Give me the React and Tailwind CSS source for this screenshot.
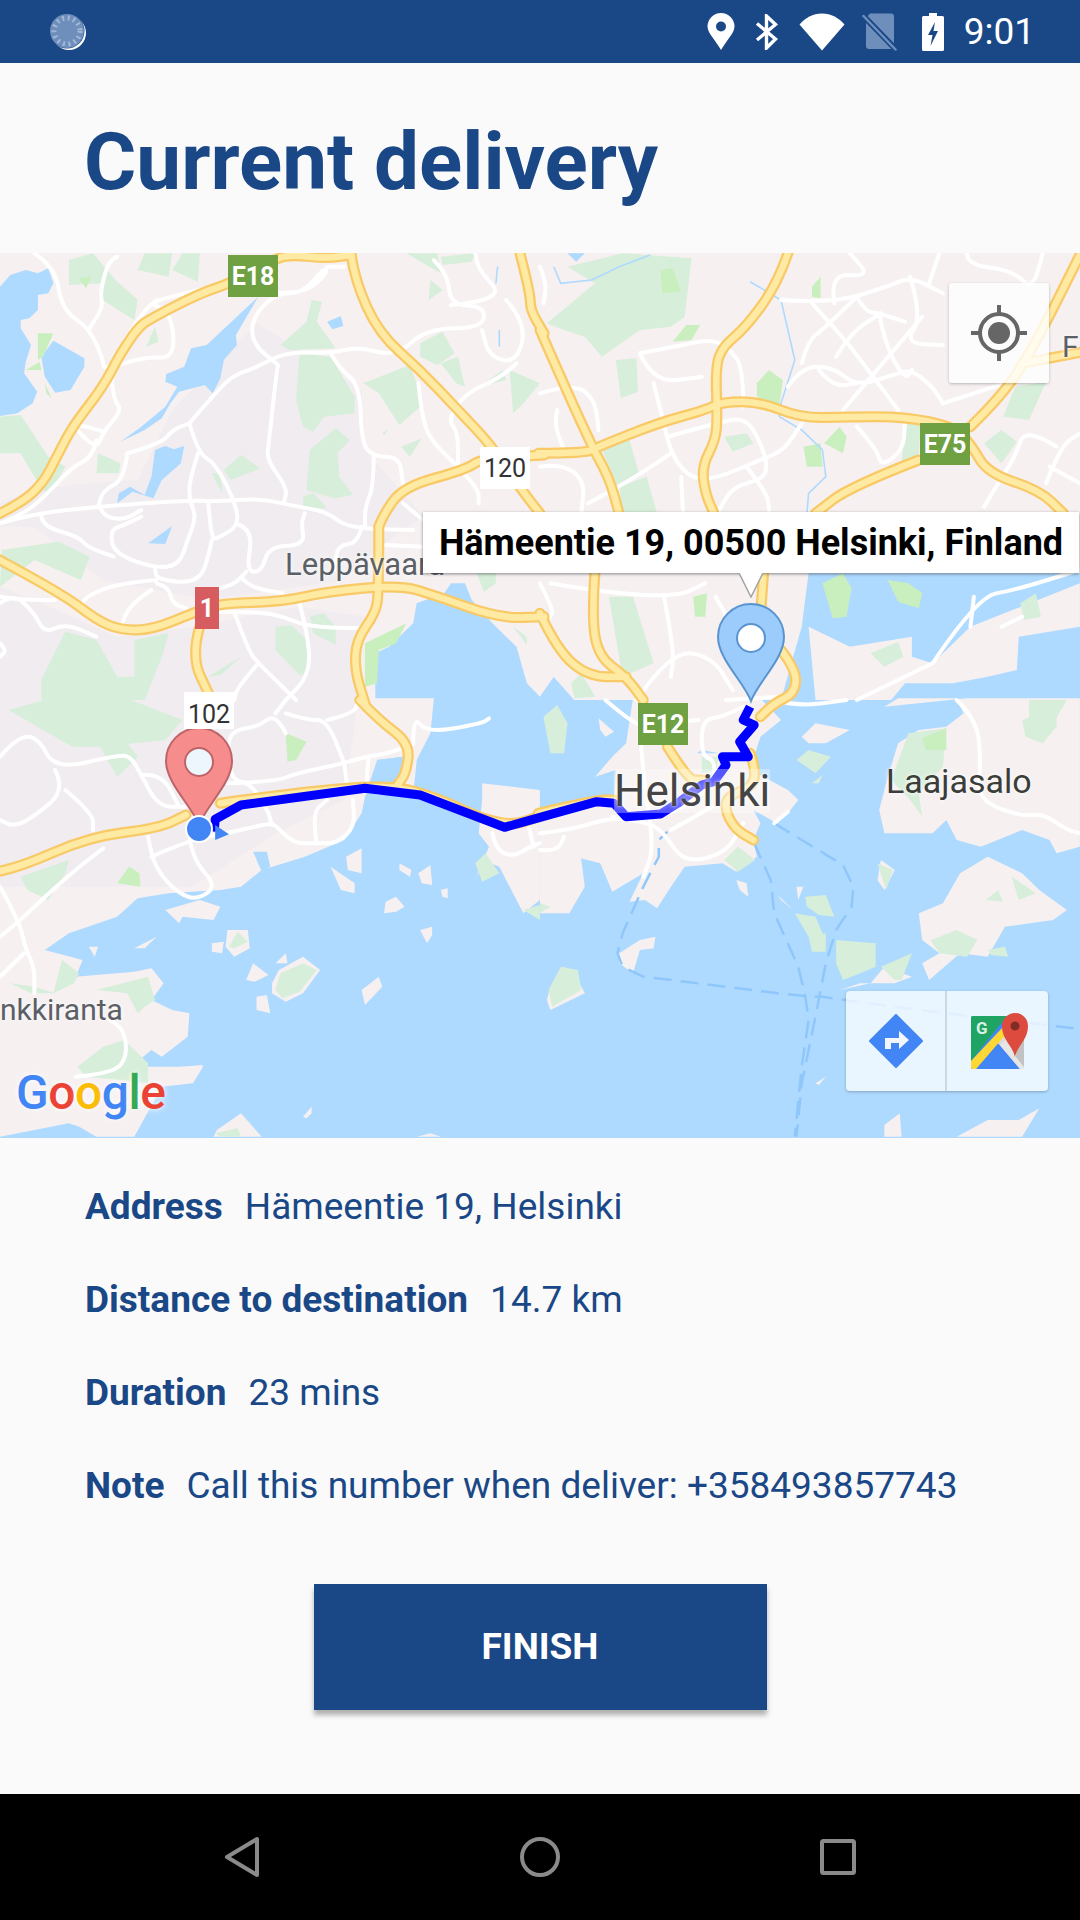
import React from "react";

const SX = 2.904, SY = 3;
const O = { A: [0, 250], B: [540, 250], C: [0, 700], D: [540, 700] };
const pts = (q, s) =>
  s.trim().split(/\s+/).map((p) => {
    const [x, y] = p.split(",").map(Number);
    return [+(O[q][0] + x / SX).toFixed(1), +(O[q][1] + y / SY).toFixed(1)];
  });
const toD = (list, close) =>
  "M" + list.map((p) => p.join(" ")).join("L") + (close ? "Z" : "");
const smooth = (list) => {
  if (list.length < 3) return toD(list);
  let d = `M${list[0][0]} ${list[0][1]}`;
  for (let i = 1; i < list.length - 1; i++) {
    const mx = (list[i][0] + list[i + 1][0]) / 2;
    const my = (list[i][1] + list[i + 1][1]) / 2;
    d += `Q${list[i][0]} ${list[i][1]} ${mx} ${my}`;
  }
  const l = list[list.length - 1];
  return d + `L${l[0]} ${l[1]}`;
};
const poly = (q, s) => toD(pts(q, s), true);
const many = (...segs) => {
  let out = [];
  for (let i = 0; i < segs.length; i += 2) out = out.concat(pts(segs[i], segs[i + 1]));
  return out;
};

const SEA = toD(
  many(
    "C", "-10,1320 -10,1000 60,1000 110,930 130,750 200,700 340,650 400,595 490,580 640,570 700,560 760,510 885,470 1000,420 1050,340 1060,290 1090,180",
    "A", "1090,1210 1130,1190 1200,1120 1210,1060 1290,1030 1310,1000 1350,1000 1370,1050 1430,1120 1500,1190 1530,1300 1568,1340",
    "B", "40,1280 100,1350 700,1350 760,1130 780,970 1580,970 1580,1350",
    "D", "1580,1320"
  ),
  true
);

const LAND = [
  ["C", "1040,-5 1260,-5 1250,100 1210,180 1200,285 1090,285 1170,250 1170,170 1095,180 1060,290 1000,300"],
  ["C", "1400,250 1568,270 1568,600 1520,640 1450,500 1400,480 1380,540 1420,440 1390,400 1400,300"],
  ["D", "0,340 100,320 130,560 85,640 0,640"],
  ["D", "270,-5 250,130 210,170 160,230 220,210 215,300 0,340 0,440 60,460 175,490 210,575 300,520 260,605 305,600 340,625 380,560 420,500 530,490 570,515 630,470 620,420 640,370 620,330 680,365 720,340 750,300 720,270 630,220 625,160 640,110 700,60 640,-5"],
  ["B", "100,1350 40,1280 20,1150 60,1000 60,970 760,970 750,1130 700,1350"],
  ["B", "780,1130 900,1190 1080,1160 1080,1220 1140,1240 1250,1130 1568,1000 1568,1130 1390,1160 1385,1260 1300,1280 1200,1300 1060,1300 1020,1350 800,1350"],
  ["D", "760,110 800,70 900,90 830,130 780,130"],
  ["D", "1040,130 1100,90 1180,80 1230,40 1210,-5 1040,-5 1000,20 1240,-5 1568,-5 1568,440 1500,460 1480,420 1400,390 1280,440 1210,420 1180,360 1140,400 1000,400 985,330 1010,230"],
  ["D", "1100,640 1170,610 1220,520 1300,470 1400,520 1450,570 1530,630 1490,660 1350,680 1300,770 1220,760 1130,840 1110,790 1160,760 1110,720"],
  ["D", "870,870 960,850 1000,800 1080,830 1030,850 930,850"],
  ["D", "990,480 1030,510 1000,570 980,540"],
  ["D", "170,55 215,95 190,110 175,90"],
  ["D", "745,560 765,560 750,600"],
  ["D", "690,585 735,630 700,600"],
  ["D", "570,540 600,550 605,590 580,570"],
  ["D", "230,760 290,720 335,710 330,745 290,750 270,820 230,790"],
  ["D", "800,1150 830,1130 810,1155"],
  ["D", "1000,1275 1045,1240 1050,1310 1000,1310"],
  ["D", "1210,1310 1300,1260 1390,1260 1450,1225 1400,1310"],
  ["D", "20,900 30,860 70,800 110,840 130,880 30,930"],
  ["C", "960,500 1030,550 1030,580 990,570"],
  ["C", "1005,470 1050,445 1050,520 1010,510"],
  ["C", "1160,490 1195,510 1190,530 1160,510"],
  ["C", "1215,520 1250,495 1255,555 1225,550"],
  ["C", "1280,570 1300,565 1300,595 1285,590"],
  ["C", "1120,605 1150,590 1175,620 1150,635 1115,640"],
  ["C", "1220,690 1255,680 1255,705 1240,730"],
  ["C", "480,630 580,600 640,620 620,660 530,650 520,670"],
  ["C", "660,690 720,690 725,745 680,770 655,740"],
  ["C", "615,730 650,725 645,760 615,755"],
  ["C", "800,790 830,760 835,790"],
  ["C", "715,840 735,790 780,825 740,845"],
  ["C", "790,850 810,810 880,770 930,810 880,880 830,905 790,880"],
  ["C", "745,890 775,885 785,940 745,930"],
  ["C", "1050,870 1100,830 1110,860 1060,915"],
  ["C", "390,745 455,710 420,745"],
  ["C", "258,740 285,740 275,770"],
  ["C", "0,930 130,750 240,780 220,830 390,815 440,805 475,850 440,900 500,930 550,940 545,1010 470,1070 440,1050 380,1100 520,1100 590,1100 560,1150 470,1160 390,1310 280,1310 230,1280 200,1270 0,1310"],
  ["C", "525,1100 590,1095 560,1150 530,1140"],
  ["C", "880,1250 905,1220 905,1240 890,1255"],
  ["C", "630,1290 700,1240 760,1310 620,1310"],
  ["C", "1210,1310 1250,1300 1280,1310"],
];

const DARKLAND = [
  ["A", "560,420 745,220 870,300 1050,420 1060,600 1230,800 1090,900 1000,990 600,1050 300,990 100,830 0,830 0,760 100,720 250,700 400,690 500,480"],
  ["A", "0,1010 120,1060 340,1160 560,1130 870,1070 1060,1100 1040,1350 0,1350"],
  ["C", "0,0 1030,0 1040,280 800,400 560,560 0,560"],
];

const GREEN = [
  ["A", "200,30 270,10 335,90 400,150 390,210 290,145 295,100 200,105"],
  ["A", "400,60 420,10 500,10 490,80"],
  ["A", "500,60 530,10 580,10 575,95"],
  ["A", "1180,10 1270,10 1280,70"],
  ["A", "1280,20 1380,10 1370,35 1285,45"],
  ["A", "425,290 450,230 460,275"],
  ["A", "815,285 890,215 905,150 935,155 920,215 975,295 840,300"],
  ["A", "870,310 960,320 1030,440 1030,490 940,500 910,545 880,530 860,450"],
  ["A", "890,720 900,600 975,535 1015,570 980,610 985,680 1025,735 970,745"],
  ["A", "1055,400 1190,345 1210,400 1220,470 1160,525 1100,430"],
  ["A", "1165,590 1225,565 1190,620"],
  ["A", "1110,550 1130,535 1115,555"],
  ["A", "1220,280 1285,245 1320,310 1270,345 1220,320"],
  ["A", "1280,340 1330,320 1350,410 1325,400"],
  ["A", "1390,410 1460,360 1470,390"],
  ["A", "1480,360 1568,400 1520,460 1490,490"],
  ["A", "1250,90 1285,120 1245,150"],
  ["A", "650,660 700,615 755,655 670,690"],
  ["A", "615,670 640,670 645,730"],
  ["A", "285,610 350,640 345,670 280,670"],
  ["A", "0,500 60,495 140,620 190,650 140,740 100,680 60,610 0,610"],
  ["A", "0,1010 5,900 170,875 260,920 235,990 100,930"],
  ["A", "120,1350 120,1290 190,1145 280,1170 340,1280 390,1280 390,1170 490,1150 470,1220 420,1350"],
  ["A", "800,1130 845,1125 900,1180 895,1270 870,1275 800,1200"],
  ["A", "900,1100 940,1090 975,1130 975,1185 910,1150"],
  ["A", "605,1280 700,1220 640,1275"],
  ["A", "880,740 910,730 950,775 880,775"],
  ["A", "1385,970 1440,960 1440,1000 1405,1025"],
  ["A", "1490,1130 1530,1160 1530,1185"],
  ["B", "20,220 160,100 80,50 240,10 440,25 420,200 380,230 290,240 180,320 130,260 70,240"],
  ["B", "220,330 280,325 285,425 235,445"],
  ["B", "180,600 260,570 290,680 225,710"],
  ["B", "230,710 310,680 340,790 240,790"],
  ["B", "535,560 600,550 620,580 560,605"],
  ["B", "1060,520 1105,525 1100,620 1050,640"],
  ["B", "1345,500 1380,410 1470,395 1420,510"],
  ["B", "1290,580 1340,540 1385,575 1340,640"],
  ["B", "200,1040 270,1040 330,1240 240,1280"],
  ["B", "960,1210 1040,1175 1055,1220 1000,1250"],
  ["B", "1395,1060 1440,1030 1455,1100 1405,1110"],
  ["B", "90,1300 120,1270 160,1340 100,1345"],
  ["C", "25,30 130,0 380,0 530,60 480,120 290,140 210,140"],
  ["C", "290,140 370,130 400,170 340,230"],
  ["C", "60,530 200,480 190,520 140,600 80,570"],
  ["C", "155,880 180,780 230,820 215,850"],
  ["C", "30,850 100,860 160,880 90,880"],
  ["C", "280,870 430,830 450,900 420,920 400,940 370,880"],
  ["C", "225,1100 300,1040 360,1020 430,1090 430,1150 350,1140 250,1130"],
  ["C", "665,740 690,695 720,725 680,745"],
  ["C", "800,870 815,820 880,790 920,810 870,875 820,895"],
  ["C", "1520,630 1568,615 1568,660"],
  ["C", "1380,490 1410,460 1450,520 1400,545"],
  ["C", "625,1300 690,1285 700,1310 640,1310"],
  ["D", "10,50 50,15 80,70 70,160 30,160"],
  ["D", "745,180 780,150 845,170 800,220"],
  ["D", "790,250 820,225 810,250"],
  ["D", "470,170 520,170 510,210 470,220"],
  ["D", "535,480 575,440 625,480 575,515"],
  ["D", "1070,100 1180,85 1170,200 1100,280 1110,350 1075,300 1020,240"],
  ["D", "1400,60 1500,20 1500,80 1460,130 1410,110"],
  ["D", "25,870 60,800 110,810 120,870 35,920"],
  ["D", "770,590 830,585 855,650 810,645 775,620"],
  ["D", "740,640 800,650 825,710 780,710"],
  ["D", "780,710 830,700 830,755 790,755"],
  ["D", "860,720 975,730 975,800 930,820 880,840 860,790"],
  ["D", "990,800 1080,760 1050,840 1030,840"],
  ["D", "1135,720 1210,690 1270,720 1240,770 1160,760"],
  ["D", "1295,600 1330,570 1345,605"],
  ["D", "1370,530 1440,580 1390,600"],
  ["D", "1300,750 1350,740 1360,770 1310,765"],
  ["D", "980,490 1025,510 1005,570"],
  ["D", "1420,0 1530,0 1490,70 1420,50"],
  ["D", "0,610 30,620 0,640"],
];

const BRIGHT = [
  ["A", "230,85 265,80 250,115"],
  ["A", "110,250 155,250 125,320 110,330"],
  ["A", "75,360 115,335 120,360"],
  ["A", "130,400 150,445 135,430"],
  ["A", "1060,1180 1180,1120 1150,1180 1100,1200 1095,1300 1060,1310"],
  ["B", "350,60 385,55 410,125 355,130"],
  ["B", "630,400 665,360 705,390 695,470 630,440"],
  ["B", "385,275 425,225 465,225 440,270"],
  ["B", "790,110 815,80 815,145 790,140"],
  ["B", "765,590 815,580 820,650 775,650"],
  ["B", "825,580 870,530 890,560 880,610"],
  ["B", "820,1000 880,970 905,1015 890,1100 850,1105"],
  ["B", "1010,990 1070,1000 1110,1030 1100,1075 1040,1055"],
  ["B", "445,1040 485,1030 480,1100 450,1100"],
  ["C", "340,550 375,500 405,520 408,560"],
  ["C", "830,100 890,125 860,180 835,185"],
  ["D", "1110,115 1180,85 1180,150 1120,150"],
];

const WATERFEATURES = [
  ["A", "0,110 30,75 75,60 110,70 140,55 155,100 140,130 110,135 110,180 85,205 60,210 60,235 90,285 75,335 70,370 108,425 95,460 50,490 0,498"],
  ["A", "120,320 155,272 245,325 245,350 205,420 160,428 130,380"],
  ["A", "750,140 685,255 688,285 650,330 640,385 618,430 595,405 520,425 495,460 470,505 420,540 350,575 410,530 480,470 515,410 480,395 483,372 535,350 555,295 600,285"],
  ["A", "950,215 990,198 997,228 965,238"],
  ["A", "450,600 480,588 505,598 535,588 525,640 470,690 445,745 415,735 385,725 340,760 345,730 378,710 420,735 440,680"],
  ["A", "430,880 500,828 480,882"],
  ["B", "80,10 130,10 105,35"],
  ["C", "90,560 125,550 145,570 115,575"],
  ["C", "735,455 775,455 785,500 760,515"],
  ["D", "455,160 520,160 470,150"],
  ["C", "1095,180 1170,170 1145,250 1095,250"],
];

const THIN_WATER = [
  ["B", "40,50 60,100 150,90 230,50 320,15"],
  ["B", "610,95 700,150 740,330 700,460 695,500 760,540 820,600 830,680 780,730 775,790"],
  ["A", "1445,50 1440,100"],
  ["A", "1450,240 1450,290"],
];

const WHITE = [
  ["A", "100,10 160,50 180,180 260,235 300,330 300,360 420,320 510,325 495,180 420,160 580,120"],
  ["A", "340,20 315,30 290,130 300,170 260,235"],
  ["A", "460,150 430,160 320,340 330,450 355,480 300,545 280,600 200,515 300,545"],
  ["A", "280,570 270,620 210,650 130,740 70,790 0,820"],
  ["A", "0,820 100,790 290,770 550,750 620,755 750,745 840,765 950,785 1010,835 1200,840"],
  ["A", "700,130 800,130 890,125 950,70 945,50 880,130 800,130 730,205 735,285 810,345 805,350 780,580 775,630 835,715 825,755"],
  ["A", "950,50 1000,50"],
  ["A", "550,520 640,410 690,370 740,355 830,305 960,310 1040,290 1150,320 1240,235 1400,235 1410,170 1310,165 1300,80 1260,30"],
  ["A", "1310,165 1470,150 1390,60 1380,10"],
  ["A", "1470,150 1530,220 1500,340 1420,320 1400,240"],
  ["A", "1500,340 1460,380 1350,430 1300,510 1330,545 1330,650"],
  ["A", "960,310 985,355 1045,405 1050,580 1085,620 1160,620 1170,700"],
  ["A", "1085,620 1085,710 1060,770 1060,830"],
  ["A", "1215,400 1225,500 1250,570 1330,650 1390,720 1390,760"],
  ["A", "550,520 575,610 625,640 680,750 695,825 640,860 615,870 605,760"],
  ["A", "575,610 550,690 550,750 570,800 545,870 520,945 450,955 330,910 320,840 360,825 410,800"],
  ["A", "290,770 300,800 360,810 410,780"],
  ["A", "370,610 360,690 300,720 285,770"],
  ["A", "370,610 470,580 500,540 550,520"],
  ["A", "120,800 125,830 230,860 250,890 330,920"],
  ["A", "695,825 735,840 715,965 760,965 780,890 885,885 875,820 885,790"],
  ["A", "615,870 610,900 580,1000 455,990 450,955"],
  ["A", "455,990 340,1000 250,1040 240,1060"],
  ["A", "700,980 720,1010 820,1030"],
  ["A", "715,965 690,1000 620,1020"],
  ["A", "1050,830 1040,880 980,885 970,960"],
  ["A", "1120,885 1230,890"],
  ["A", "1170,760 1240,820"],
  ["A", "640,1085 680,1085 800,1090 890,1130 1040,1135"],
  ["A", "870,1060 900,1180 895,1280 830,1350"],
  ["A", "680,1085 720,1200 750,1240 860,1350"],
  ["A", "750,1240 690,1310 680,1350"],
  ["A", "455,1000 490,1010 500,1060 540,1075"],
  ["A", "440,1020 380,1060 350,1130"],
  ["A", "0,1060 40,1030 100,1090 130,1150 190,1120 280,1160"],
  ["A", "0,1040 70,1050 160,1050"],
  ["A", "0,1180 20,1200 0,1220"],
  ["C", "0,170 50,110 110,110 160,210 340,165 380,170 410,225 460,320 540,320"],
  ["C", "160,210 190,270 100,350 40,380 0,360"],
  ["C", "190,270 270,340 270,390"],
  ["C", "410,225 470,220 520,320"],
  ["C", "660,250 800,245 860,220 1000,190 1060,170 1130,160 1200,130"],
  ["C", "1000,190 1010,280"],
  ["C", "1070,170 1065,250"],
  ["C", "830,100 800,40 750,80 680,90 660,130 670,240 730,250 780,340"],
  ["C", "800,40 830,0"],
  ["C", "830,40 890,60 950,60 1000,190"],
  ["C", "950,60 1030,40 1040,0"],
  ["C", "1200,130 1200,45 1240,100 1400,70 1420,55"],
  ["C", "430,410 440,470 470,530 520,580 570,600 630,560 570,490 550,420"],
  ["C", "440,470 550,420 660,400 780,370 800,375 850,430 920,430 980,430 1030,380 1025,300"],
  ["C", "780,340 790,375"],
  ["C", "920,430 905,340 950,300"],
  ["C", "0,560 55,660 75,750 100,800 100,880"],
  ["C", "0,710 60,660 130,590 230,500 300,445"],
  ["C", "0,830 70,760"],
  ["C", "220,1130 330,1120 370,1070 360,990 320,960"],
  ["C", "1430,400 1440,450 1490,470 1540,440 1568,430"],
  ["C", "1530,360 1550,440"],
  ["D", "0,400 90,390 210,350 320,370 360,400 420,490 540,460 590,370"],
  ["D", "0,450 50,455 70,410"],
  ["D", "210,350 330,370 500,270 510,180 470,170 470,60 530,50 590,20"],
  ["D", "380,390 500,320"],
  ["D", "320,370 330,450 300,530"],
  ["D", "290,90 300,230 320,370"],
  ["D", "190,0 290,90 340,70 460,60"],
  ["D", "680,0 750,20 890,0"],
  ["D", "680,370 720,335"],
  ["D", "1210,0 1270,60 1280,190 1270,300 1400,350 1460,340 1530,390 1568,400"],
  ["B", "540,1350 700,1340"],
  ["B", "0,50 20,100 10,160"],
  ["B", "290,310 440,280 490,270 540,285"],
  ["B", "290,310 330,400 470,380"],
  ["B", "330,400 355,500 380,610 430,680 500,690 640,630 710,600 760,520"],
  ["B", "370,560 510,520 600,500 650,600 660,660 640,690 560,710 520,780"],
  ["B", "590,470 590,350 550,300"],
  ["B", "600,650 660,730 665,780"],
  ["B", "410,680 415,790"],
  ["B", "380,610 280,680 140,760"],
  ["B", "0,430 100,400 160,450 170,540"],
  ["B", "50,480 40,520 70,600"],
  ["B", "0,650 60,640 130,690 120,790"],
  ["B", "700,150 850,160 1010,110 1075,80 1170,130"],
  ["B", "720,410 760,350 850,350 920,410 1040,370 1080,360 1140,410 1170,460"],
  ["B", "1170,460 1290,420 1350,400"],
  ["B", "790,160 880,260 960,370 1040,480"],
  ["B", "1110,200 1020,310 880,480"],
  ["B", "1075,80 1110,200 1060,280 1170,285"],
  ["B", "985,190 1000,280 1060,390 1080,360"],
  ["B", "855,160 840,70 960,80 900,10"],
  ["B", "920,140 945,185 985,190 1060,215"],
  ["B", "760,340 780,270 820,240 920,140"],
  ["B", "810,360 850,410 920,400"],
  ["B", "860,320 900,250 990,190"],
  ["B", "1160,10 1130,100"],
  ["B", "1240,10 1240,45 1370,60 1430,120 1460,10"],
  ["B", "920,530 980,600 990,650 1055,600 1060,520"],
  ["B", "1500,590 1410,530 1380,620 1330,700 1290,770"],
  ["B", "1470,700 1510,590 1568,550"],
  ["B", "1480,650 1568,700"],
  ["B", "1140,1240 1270,1040 1380,1020 1568,960"],
  ["B", "920,1350 1140,1240"],
  ["B", "1250,1130 1260,1040"],
  ["B", "1340,1130 1400,1100"],
  ["B", "30,1000 200,1030 400,1040 480,1000"],
  ["B", "360,1040 390,1200 380,1280"],
  ["B", "280,1350 380,1200 500,1220 560,1320"],
  ["B", "0,1000 40,1080 30,1100"],
  ["B", "560,1130 510,1040"],
  ["B", "700,1130 650,1140"],
];

const YELLOW = [
  ["A", "-10,795 60,760 125,700 165,620 210,530 300,410 350,310 400,235 430,210 580,130 670,100 800,25 850,15 950,25 1020,15"],
  ["A", "1020,15 1030,90 1100,250 1220,360 1330,480 1430,590 1500,700 1568,790"],
  ["B", "0,240 140,570 200,680 230,790 230,800"],
  ["A", "1510,10 1540,130 1540,180 1580,250"],
  ["B", "160,960 150,1100 170,1220 250,1280 300,1350"],
  ["B", "0,1090 50,1200 140,1280 250,1280"],
  ["A", "1100,830 1110,800 1170,710 1350,660 1400,625 1580,615"],
  ["B", "-5,610 130,610 170,590 340,520 480,480 530,455 640,455 760,505 900,500 1060,500 1200,530 1250,580 1300,670 1450,720 1520,790"],
  ["A", "1100,830 1100,1030 1090,1090 1035,1170 1030,1260 1060,1360"],
  ["C", "1045,0 1100,60 1190,130 1180,220 1150,260"],
  ["A", "-10,925 180,1030 280,1110 350,1140 440,1140 570,1085 640,1060 820,1055 950,1025 1160,1005 1260,1035 1450,1105 1580,1100"],
  ["B", "720,10 690,100 600,230 530,290 510,350 515,500 510,570 470,650 480,730 505,790"],
  ["B", "650,960 640,1100"],
  ["B", "700,1200 745,1260 740,1330 680,1360 640,1400"],
  ["D", "370,140 430,240 470,240"],
  ["D", "610,160 625,200 620,260 540,290 540,340 570,390 620,420"],
  ["A", "580,1130 555,1220 610,1340"],
  ["C", "-10,515 50,505 260,410 460,385 540,345"],
  ["C", "640,310 700,300 1060,255 1220,270 1460,385 1580,345"],
  ["D", "-5,340 160,300 215,300"],
  ["B", "1100,630 900,710 800,790"],
  ["B", "1250,530 1340,440 1430,300 1580,-10"],
  ["B", "1400,340 1580,305"],
];

const FERRY = [
  ["D", "1550,985 1180,940 920,905 820,890 770,888 690,880 460,850 300,830 240,800 225,760 240,700 300,560 345,470 345,420 370,395"],
  ["D", "680,370 880,495 910,560 905,620 860,690 830,790 800,950 760,1150 745,1310"],
  ["D", "620,425 670,540 680,640 750,800 770,888 780,960 760,1100 740,1310"],
];

const ROUTE = many(
  "C", "622,395 625,358 700,315 1060,265 1220,285 1465,382",
  "D", "0,352 165,305 215,310 250,350 350,342 400,310 470,255 505,245 540,195 530,170 605,170 580,125 622,75 590,60 610,20"
);

const Pin = ({ cx, top, fill, stroke, dot, dotStroke }) => {
  const t = top;
  return (
    <g>
      <path
        d={`M${cx} ${t + 97}C${cx - 7} ${t + 78} ${cx - 33} ${t + 55} ${cx - 33} ${t + 33}A33 33 0 1 1 ${cx + 33} ${t + 33}C${cx + 33} ${t + 55} ${cx + 7} ${t + 78} ${cx} ${t + 97}Z`}
        fill={fill}
        stroke={stroke}
        strokeWidth="2"
      />
      <circle cx={cx} cy={t + 34} r="14" fill={dot} stroke={dotStroke} strokeWidth="2" />
    </g>
  );
};

const MapDrawing = () => (
  <svg viewBox="0 253 1080 885" className="absolute inset-0 w-[1080px] h-[885px]">
    <rect x="0" y="253" width="1080" height="885" fill="#f6f0f1" />
    {DARKLAND.map(([q, s], i) => <path key={i} d={poly(q, s)} fill="#f0ecef" />)}
    <path d={SEA} fill="#aedaff" />
    {LAND.map(([q, s], i) => <path key={i} d={poly(q, s)} fill="#f6f0f1" />)}
    {WATERFEATURES.map(([q, s], i) => <path key={i} d={poly(q, s)} fill="#aedaff" />)}
    {GREEN.map(([q, s], i) => <path key={i} d={poly(q, s)} fill="#d6eeda" />)}
    {BRIGHT.map(([q, s], i) => <path key={i} d={poly(q, s)} fill="#c9efbe" />)}
    {THIN_WATER.map(([q, s], i) => <path key={i} d={toD(pts(q, s))} fill="none" stroke="#aedaff" strokeWidth="1.6" />)}
    {FERRY.map(([q, s], i) => (
      <path key={i} d={toD(pts(q, s))} fill="none" stroke="#8fc7fb" strokeWidth="2.5" strokeDasharray="18 9" />
    ))}
    <g fill="none" stroke="#ffffff" strokeWidth="4" strokeLinejoin="round" strokeLinecap="round">
      {WHITE.map(([q, s], i) => <path key={i} d={smooth(pts(q, s))} />)}
    </g>
    <g fill="none" stroke="#f9c965" strokeWidth="11" strokeLinejoin="round" strokeLinecap="round">
      {YELLOW.map(([q, s], i) => <path key={i} d={smooth(pts(q, s))} />)}
    </g>
    <g fill="none" stroke="#feeaa3" strokeWidth="6.5" strokeLinejoin="round" strokeLinecap="round">
      {YELLOW.map(([q, s], i) => <path key={i} d={smooth(pts(q, s))} />)}
    </g>
    <path d={toD(ROUTE)} fill="none" stroke="#0000ff" strokeWidth="9" strokeLinejoin="round" />
    <path d={poly("C", "625,375 665,403 625,420")} fill="#4285f4" />
    <Pin cx={199} top={728} fill="#f78c8c" stroke="#bd6468" dot="#eef6fd" dotStroke="#bd6468" />
    <circle cx="199" cy="829" r="13" fill="#4285f4" stroke="#ffffff" strokeWidth="2" />
    <Pin cx={751} top={604} fill="#9bccfb" stroke="#5a94d0" dot="#ffffff" dotStroke="#5a94d0" />
  </svg>
);

const Badge = ({ className, children }) => (
  <div className={`absolute flex items-center justify-center text-[25px] leading-none ${className}`}>
    {children}
  </div>
);

const Label = ({ className, children }) => (
  <div className={`absolute whitespace-nowrap leading-none [text-shadow:0_0_3px_#ffffffcc,0_0_6px_#ffffffaa] ${className}`}>
    {children}
  </div>
);

const Field = ({ label, value }) => (
  <div className="h-[93px] flex items-center gap-[22px] text-[37px] leading-none">
    <span className="font-bold">{label}</span>
    <span>{value}</span>
  </div>
);

export default function App() {
  return (
    <div className="w-[1080px] h-[1920px] flex flex-col bg-[#fafafa] text-[#1a4887] font-['Roboto',sans-serif] overflow-hidden">
      <div className="h-[63px] shrink-0 bg-[#1a4887] flex items-center justify-between pl-[49px] pr-[45px]">
        <svg width="38" height="38" viewBox="0 0 38 38">
          <circle cx="20" cy="20" r="17" fill="#ffffff" />
          <circle cx="18" cy="18" r="17.5" fill="#1a4887" />
          <circle cx="18" cy="18" r="17" fill="#6e8fbc" />
          <circle cx="18" cy="18" r="13" fill="none" stroke="#a3b8d6" strokeWidth="5" strokeDasharray="2 3.6" />
          <circle cx="18" cy="18" r="9.5" fill="#6e8fbc" />
        </svg>
        <div className="flex items-center text-white">
          <svg width="28" height="38" viewBox="0 0 28 38" className="mr-[20px]">
            <path d="M14 37C9 28 0.500 20 0.500 13.500A13.500 13.500 0 0 1 27.500 13.500C27.500 20 19 28 14 37ZM14 8.500A5 5 0 1 0 14 18.500A5 5 0 1 0 14 8.500Z" fill="#ffffff" fillRule="evenodd" />
          </svg>
          <svg width="24" height="36" viewBox="0 0 24 36" className="mr-[20px]">
            <path d="M2 9.500L20.500 25L11.500 34V2L20.500 10.500L2 26" fill="none" stroke="#ffffff" strokeWidth="3.400" strokeLinejoin="miter" />
          </svg>
          <svg width="46" height="38" viewBox="0 0 46 38" className="mr-[17px]">
            <path d="M23 37.500L0.500 11.500C6 5 14 0.500 23 0.500C32 0.500 40 5 45.500 11.500Z" fill="#ffffff" />
          </svg>
          <svg width="36" height="38" viewBox="0 0 36 38" className="mr-[24px]">
            <path d="M8 0.500H29A3 3 0 0 1 32 3.500V33A3 3 0 0 1 29 36H7A3 3 0 0 1 4 33V5Z" fill="#6e8fbc" />
            <path d="M1.500 3L33.500 36" stroke="#1a4887" strokeWidth="6" />
            <path d="M1.500 3L33.500 36.500" stroke="#6e8fbc" strokeWidth="2.500" strokeLinecap="round" />
          </svg>
          <svg width="22" height="38" viewBox="0 0 22 38" className="mr-[20px]">
            <path d="M7 0H15V3H20.500A1.500 1.500 0 0 1 22 4.500V36.500A1.500 1.500 0 0 1 20.500 38H1.500A1.500 1.500 0 0 1 0 36.500V4.500A1.500 1.500 0 0 1 1.500 3H7ZM13 9L6 22H10.500L8.500 33L16 18H11.500Z" fill="#ffffff" fillRule="evenodd" />
          </svg>
          <span className="text-[37px] leading-none">9:01</span>
        </div>
      </div>

      <div className="h-[190px] shrink-0 flex items-center pl-[84px] pt-[8px]">
        <h1 className="text-[80px] font-bold leading-none">Current delivery</h1>
      </div>

      <div className="relative h-[885px] shrink-0 overflow-hidden">
        <MapDrawing />
        <Badge className="left-[228px] top-[2px] w-[50px] h-[42px] bg-[#6fa042] text-white font-bold">E18</Badge>
        <Badge className="left-[920px] top-[170px] w-[50px] h-[42px] bg-[#6fa042] text-white font-bold">E75</Badge>
        <Badge className="left-[638px] top-[450px] w-[50px] h-[42px] bg-[#6fa042] text-white font-bold">E12</Badge>
        <Badge className="left-[195px] top-[334px] w-[24px] h-[42px] bg-[#d75c60] text-white font-bold">1</Badge>
        <Badge className="left-[480px] top-[194px] w-[50px] h-[42px] bg-white text-[#333333]">120</Badge>
        <Badge className="left-[184px] top-[439px] w-[50px] h-[37px] pt-[8px] bg-white text-[#333333]">102</Badge>

        <Label className="left-[285px] top-[296px] text-[31px] text-[#5b6067]">Leppävaara</Label>
        <Label className="left-[614px] top-[516px] px-0 text-[44px] text-[#454545] bg-[#ffffff55]">Helsinki</Label>
        <Label className="left-[886px] top-[511px] text-[34px] text-[#3a3d38]">Laajasalo</Label>
        <Label className="left-0 top-[742px] text-[30px] text-[#5b6067]">nkkiranta</Label>
        <Label className="left-[1062px] top-[79px] text-[30px] text-[#5b6067]">F</Label>

        <div className="absolute left-[423px] top-[259px] w-[656px] h-[61px] bg-white shadow-[0_1px_3px_rgba(0,0,0,0.45)] flex items-center justify-center text-black font-bold text-[36px] leading-none whitespace-nowrap">
          Hämeentie 19, 00500 Helsinki, Finland
        </div>
        <svg width="26" height="25" viewBox="0 0 26 25" className="absolute left-[738px] top-[320px]">
          <path d="M1 0H25L13 24Z" fill="#ffffff" />
          <path d="M1 0L13 24L25 0" fill="none" stroke="#a3a3a3" strokeWidth="1.500" />
        </svg>

        <div className="absolute left-[949px] top-[30px] w-[100px] h-[100px] rounded-[3px] bg-[#ffffffcc] shadow-[0_1px_3px_rgba(0,0,0,0.25)] flex items-center justify-center">
          <svg width="56" height="56" viewBox="0 0 56 56">
            <circle cx="28" cy="28" r="19" fill="none" stroke="#666666" strokeWidth="4" />
            <circle cx="28" cy="28" r="11" fill="#666666" />
            <path d="M28 0V9M28 47V56M0 28H9M47 28H56" stroke="#666666" strokeWidth="4" />
          </svg>
        </div>

        <div className="absolute left-[846px] top-[738px] w-[202px] h-[100px] rounded-[4px] bg-[#ffffffbb] shadow-[0_1px_3px_rgba(0,0,0,0.25)] flex">
          <div className="w-[101px] h-full flex items-center justify-center border-r-2 border-[#c9d8e6]">
            <svg width="54" height="54" viewBox="0 0 54 54">
              <path d="M27 1L53 27L27 53L1 27Z" fill="#4285f4" stroke="#4285f4" strokeWidth="2" strokeLinejoin="round" />
              <path d="M16 35V24H30V17L40 26L30 35V29H22V35Z" fill="#f2f7ff" />
            </svg>
          </div>
          <div className="flex-1 flex items-center justify-center">
            <svg width="58" height="58" viewBox="0 0 58 58" className="ml-[2px]">
              <rect x="1" y="4" width="53" height="53" rx="2" fill="#4285f4" />
              <path d="M1 6A2 2 0 0 1 3 4H37L1 49Z" fill="#1fa463" />
              <path d="M37 4H54V57H50L27 30Z" fill="#dcdcdc" />
              <path d="M1 49L33 15L38 20L6 57H3A2 2 0 0 1 1 55Z" fill="#fdd835" />
              <path d="M38 26L54 44V57H50L30 33Z" fill="#e6e6e6" />
              <path d="M46 22H54V55L46 45Z" fill="#c2c2c2" />
              <text x="6" y="22" fontFamily="Roboto, sans-serif" fontWeight="700" fontSize="17" fill="#d8f0e2">G</text>
              <path d="M45 45C43 34 32 28 32 14A13 13 0 0 1 58 14C58 28 47 34 45 45Z" fill="#dd4b3e" />
              <circle cx="45" cy="14" r="4.500" fill="#802d27" />
            </svg>
          </div>
        </div>

        <div className="absolute left-[16px] top-[816px] font-medium text-[48px] leading-none tracking-[-0.5px] [text-shadow:0_0_4px_#ffffffbb,0_0_8px_#ffffffaa]">
          <span className="text-[#4285f4]">G</span>
          <span className="text-[#ea4335]">o</span>
          <span className="text-[#fbbc05]">o</span>
          <span className="text-[#4285f4]">g</span>
          <span className="text-[#34a853]">l</span>
          <span className="text-[#ea4335]">e</span>
        </div>
      </div>

      <div className="flex-1 flex flex-col">
        <div className="pl-[85px] pt-[22px]">
          <Field label="Address" value="Hämeentie 19, Helsinki" />
          <Field label="Distance to destination" value="14.7 km" />
          <Field label="Duration" value="23 mins" />
          <Field label="Note" value="Call this number when deliver: +358493857743" />
        </div>
        <div className="flex justify-center mt-[52px]">
          <button className="w-[453px] h-[126px] bg-[#1a4887] text-white font-bold text-[37px] shadow-[0_5px_5px_rgba(0,0,0,0.3)]">
            FINISH
          </button>
        </div>
      </div>

      <div className="h-[126px] shrink-0 bg-black flex items-center justify-center">
        <div className="w-[632px] flex items-center justify-between">
          <svg width="36" height="42" viewBox="0 0 36 42">
            <path d="M33 3V39L3 21Z" fill="none" stroke="#8a8a8a" strokeWidth="4" strokeLinejoin="round" />
          </svg>
          <svg width="40" height="40" viewBox="0 0 40 40">
            <circle cx="20" cy="20" r="18" fill="none" stroke="#8a8a8a" strokeWidth="4" />
          </svg>
          <svg width="36" height="36" viewBox="0 0 36 36">
            <rect x="2" y="2" width="32" height="32" rx="1.500" fill="none" stroke="#8a8a8a" strokeWidth="4" />
          </svg>
        </div>
      </div>
    </div>
  );
}
